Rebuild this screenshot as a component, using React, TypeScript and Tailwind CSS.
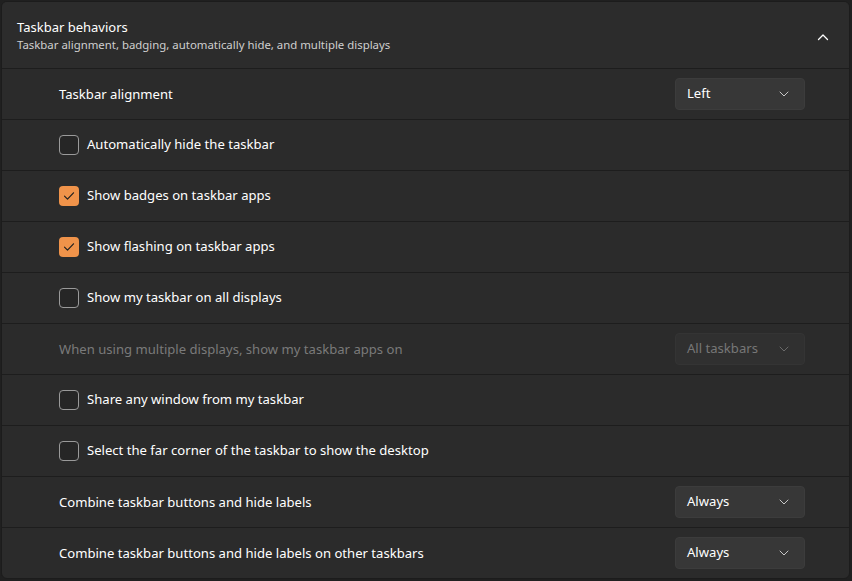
import React from "react";

type Row =
  | { kind: "select"; label: string; value: string; disabled?: boolean }
  | { kind: "check"; label: string; checked: boolean };

const rows: Row[] = [
  { kind: "select", label: "Taskbar alignment", value: "Left" },
  { kind: "check", label: "Automatically hide the taskbar", checked: false },
  { kind: "check", label: "Show badges on taskbar apps", checked: true },
  { kind: "check", label: "Show flashing on taskbar apps", checked: true },
  { kind: "check", label: "Show my taskbar on all displays", checked: false },
  { kind: "select", label: "When using multiple displays, show my taskbar apps on", value: "All taskbars", disabled: true },
  { kind: "check", label: "Share any window from my taskbar", checked: false },
  { kind: "check", label: "Select the far corner of the taskbar to show the desktop", checked: false },
  { kind: "select", label: "Combine taskbar buttons and hide labels", value: "Always" },
  { kind: "select", label: "Combine taskbar buttons and hide labels on other taskbars", value: "Always" },
];

function ChevronDown({ dim }: { dim?: boolean }) {
  return (
    <svg width="10" height="6" viewBox="0 0 10 6" className={dim ? "text-[#6a6a6a]" : "text-[#c8c8c8]"}>
      <path d="M1 1l4 4 4-4" fill="none" stroke="currentColor" strokeWidth="1" strokeLinecap="round" strokeLinejoin="round" />
    </svg>
  );
}

function Checkbox({ checked }: { checked: boolean }) {
  if (checked) {
    return (
      <div className="w-5 h-5 rounded-[4px] bg-[#f0934a] flex items-center justify-center">
        <svg width="12" height="10" viewBox="0 0 12 10">
          <path d="M1.5 5.2l3 3 6-6.4" fill="none" stroke="#1f1f1f" strokeWidth="1.2" strokeLinecap="round" strokeLinejoin="round" />
        </svg>
      </div>
    );
  }
  return <div className="w-5 h-5 rounded-[4px] border border-[#9a9a9a] bg-[#262626]" />;
}

export default function App() {
  return (
    <div className="w-[852px] h-[581px] bg-[#202020] pt-[1px] pl-[1px] overflow-hidden" style={{ fontFamily: '"Noto Sans", "Open Sans", sans-serif' }}>
      <div className="w-[849px] rounded-[6px] border border-[#1c1c1c] overflow-hidden bg-[#2b2b2b]">
        {/* Header */}
        <div className="h-[66px] bg-[#2c2c2c] flex items-center justify-between pl-[15px] pr-[20px]">
          <div className="flex flex-col">
            <span className="text-[13px] leading-[20px] text-white">Taskbar behaviors</span>
            <span className="text-[11.4px] leading-[16px] text-[#cfcfcf]">Taskbar alignment, badging, automatically hide, and multiple displays</span>
          </div>
          <svg width="12" height="8" viewBox="0 0 12 8" className="mt-[3px]">
            <path d="M1.5 6.5l4.5-4.5 4.5 4.5" fill="none" stroke="#ffffff" strokeWidth="1.3" strokeLinecap="round" strokeLinejoin="round" />
          </svg>
        </div>

        {rows.map((r, i) => (
          <div key={i} className="h-[51px] border-t border-[#1d1d1d] flex items-center justify-between pl-[57px] pr-[44px]">
            {r.kind === "check" ? (
              <div className="flex items-center gap-[8px]">
                <Checkbox checked={r.checked} />
                <span className="text-[13.1px] text-white">{r.label}</span>
              </div>
            ) : (
              <>
                <span className={`text-[13.1px] pt-[2px] ${r.disabled ? "text-[#7a7a7a]" : "text-white"}`}>{r.label}</span>
                <div
                  className={`w-[130px] h-[32px] rounded-[4px] flex items-center justify-between pl-[11px] pr-[15px] border ${
                    r.disabled ? "bg-[#303030] border-[#343434]" : "bg-[#373737] border-[#3c3c3c]"
                  }`}
                >
                  <span className={`text-[13.1px] ${r.disabled ? "text-[#777777]" : "text-white"}`}>{r.value}</span>
                  <ChevronDown dim={r.disabled} />
                </div>
              </>
            )}
          </div>
        ))}
      </div>
    </div>
  );
}
